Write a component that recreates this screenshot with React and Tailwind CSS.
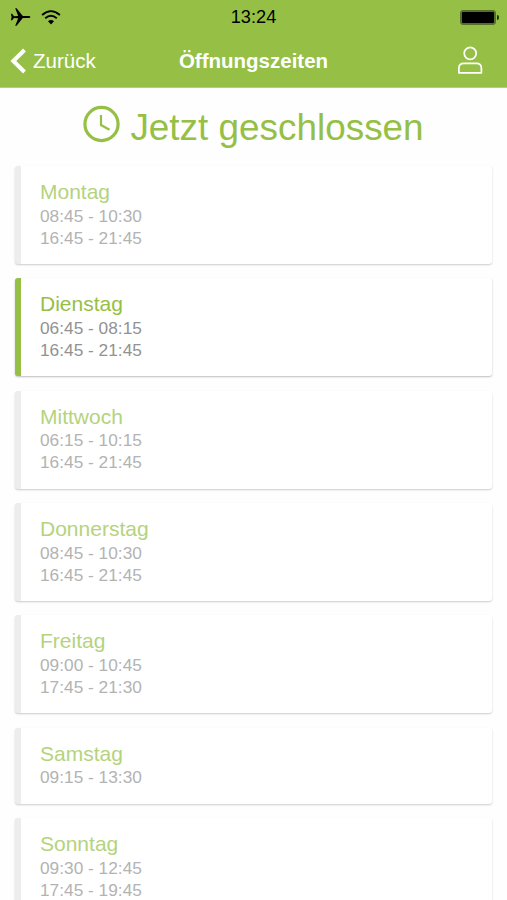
import React from 'react';

const days = [
  { name: 'Montag', hours: ['08:45 - 10:30', '16:45 - 21:45'] },
  { name: 'Dienstag', hours: ['06:45 - 08:15', '16:45 - 21:45'], today: true },
  { name: 'Mittwoch', hours: ['06:15 - 10:15', '16:45 - 21:45'] },
  { name: 'Donnerstag', hours: ['08:45 - 10:30', '16:45 - 21:45'] },
  { name: 'Freitag', hours: ['09:00 - 10:45', '17:45 - 21:30'] },
  { name: 'Samstag', hours: ['09:15 - 13:30'] },
  { name: 'Sonntag', hours: ['09:30 - 12:45', '17:45 - 19:45'] }
];

const StatusBar = () => (
  <div className="grid h-[34px] grid-cols-3 items-center pl-[10px] pr-[8px] text-black">
    <div className="flex items-center gap-[10px]">
      <svg className="h-[18px] w-[21px]" viewBox="0 0 21 18" fill="currentColor">
        <path d="M20.300 9c0-.7-.8-1-2-1h-5.500L6.600.3H5.200l3 7.600-4.200.3-1.900-2.500H.9l.7 3.300-.7 3.300h1.200L4 9.900l4.200.3-3 7.600h1.400l6.200-7.700h5.500c1.200 0 2-.4 2-1.100z" />
      </svg>
      <svg className="h-[15px] w-[20px]" viewBox="0 0 20 15" fill="none" stroke="currentColor" strokeWidth="1.800">
        <path d="M1.100 5Q10-2.800 18.900 5" />
        <path d="M4.200 8.300Q10 3.300 15.800 8.300" />
        <path d="M7 11.300Q10 8.900 13 11.300L10 14.400z" fill="currentColor" stroke="none" />
      </svg>
    </div>
    <div className="pr-[2px] text-center text-[18.200px] leading-none">13:24</div>
    <div className="flex items-center justify-end gap-px">
      <div className="h-[15px] w-[36px] rounded-[3px] border border-[#56702a] bg-[#56702a] p-px">
        <div className="h-full rounded-[1px] bg-black" />
      </div>
      <div className="h-[5px] w-[2px] rounded-r-full bg-[#26330f]" />
    </div>
  </div>
);

const NavBar = () => (
  <div className="grid h-[53px] grid-cols-3 items-center pl-[10px] pr-[24px] text-white">
    <button className="flex items-center gap-[6px] text-[20.500px] leading-none">
      <svg className="h-[26px] w-[17px]" viewBox="0 0 17 26" fill="none" stroke="currentColor" strokeWidth="4">
        <path d="M14.500 2L3.300 13l11.200 11" />
      </svg>
      <span className="pt-[2px]">Zurück</span>
    </button>
    <h1 className="justify-self-center pt-[2px] pl-[14px] text-[20.500px] leading-none font-bold">Öffnungszeiten</h1>
    <button className="justify-self-end pb-px">
      <svg className="h-[28px] w-[26px]" viewBox="0 0 26 28" fill="none" stroke="currentColor" strokeWidth="1.700">
        <circle cx="13.200" cy="7.300" r="6" />
        <path d="M1.900 26.800v-4.500q0-5 5-5h12.500q5 0 5 5v4.500z" strokeLinejoin="round" />
      </svg>
    </button>
  </div>
);

const DayCard = ({ day }) => (
  <li
    className={`rounded-[3px] border-l-[6px] bg-white pt-[14px] pb-[15.200px] pl-[19px] ${
      day.today
        ? 'border-[#95c045] shadow-[0_1px_2px_rgba(0,0,0,0.260)]'
        : 'border-[#ededed] shadow-[0_1px_2px_rgba(0,0,0,0.200)]'
    }`}
  >
    <h2 className={`text-[21px] leading-[24.600px] ${day.today ? 'text-[#95c045]' : 'text-[#b5d37d]'}`}>
      {day.name}
    </h2>
    {day.hours.map((time) => (
      <p key={time} className={`text-[17.300px] leading-[22.100px] ${day.today ? 'text-[#929292]' : 'text-[#b3b3b3]'}`}>
        {time}
      </p>
    ))}
  </li>
);

const App = () => {
  return (
    <div className="h-[900px] w-full overflow-hidden bg-[#fefefe] font-['Liberation_Sans',Arial,sans-serif]">
      <header className="h-[88px] border-b border-[#b5ca8a] bg-[#95c045]">
        <StatusBar />
        <NavBar />
      </header>

      <div className="flex h-[78px] items-center justify-center gap-[9px] text-[#95c045]">
        <svg className="mb-[6px] h-[38px] w-[38px]" viewBox="0 0 38 38" fill="none" stroke="currentColor">
          <circle cx="18.500" cy="19" r="16.600" strokeWidth="3.200" />
          <path d="M18 10v10l8.500 4.800" strokeWidth="2.200" />
        </svg>
        <span className="pt-[2px] text-[36.900px] leading-[42px]">Jetzt geschlossen</span>
      </div>

      <ul className="flex flex-col gap-[14.400px] pr-[15px] pl-[15px]">
        {days.map((day) => (
          <DayCard key={day.name} day={day} />
        ))}
      </ul>
    </div>
  );
};

export default App;
